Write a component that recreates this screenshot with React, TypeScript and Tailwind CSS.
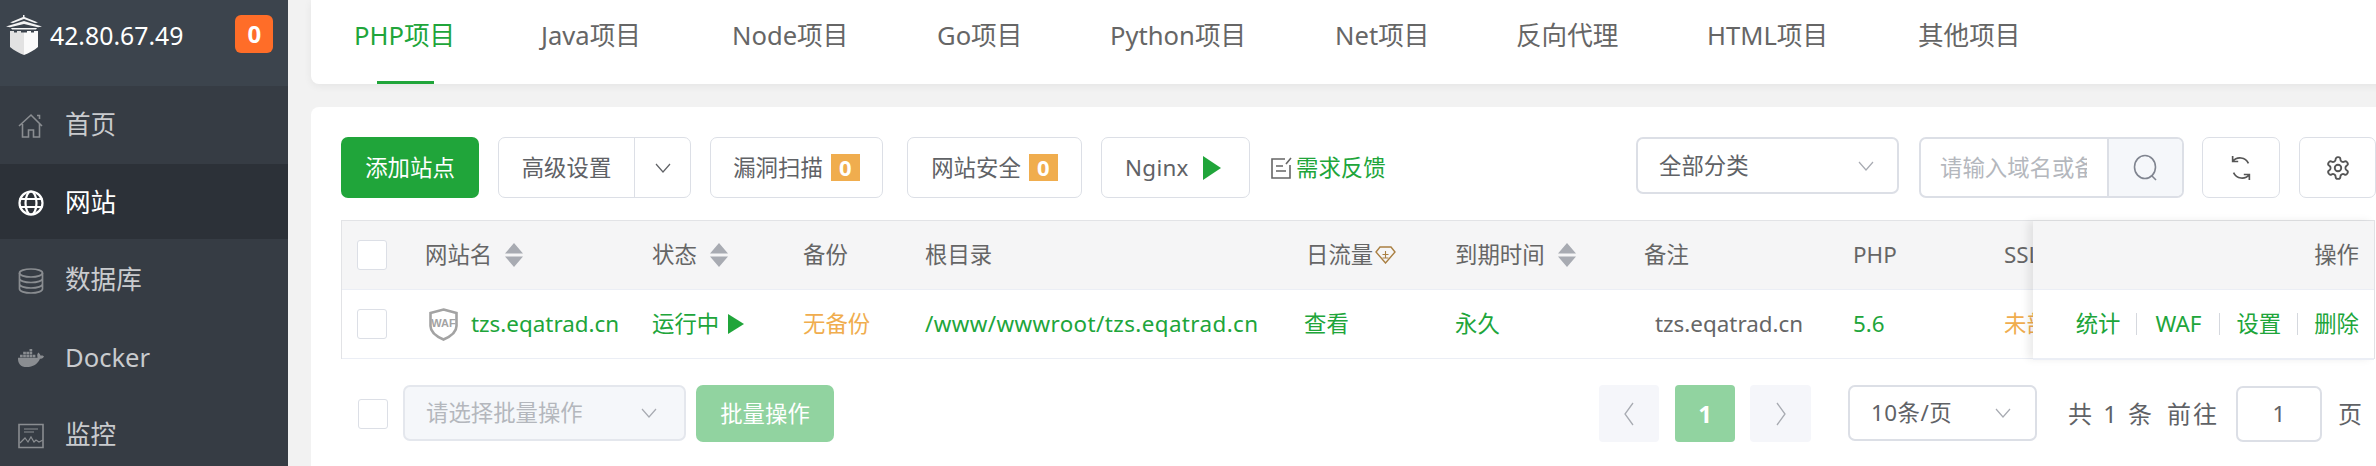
import type { ReactNode } from "react";
import { FaDocker } from "react-icons/fa";

// tab widths include the gap up to the next tab
const tabs = [
	{ label: "PHP项目", width: "w-[187px]" },
	{ label: "Java项目", width: "w-[191px]" },
	{ label: "Node项目", width: "w-[205px]" },
	{ label: "Go项目", width: "w-[173px]" },
	{ label: "Python项目", width: "w-[225px]" },
	{ label: "Net项目", width: "w-[181px]" },
	{ label: "反向代理", width: "w-[191px]" },
	{ label: "HTML项目", width: "w-[211px]" },
	{ label: "其他项目", width: "w-[110px]" },
];

const fontStack = "font-['Noto_Sans','Noto_Sans_CJK_SC',sans-serif]";

function HouseIcon() {
	return (
		<svg width="26" height="26" viewBox="0 0 26 26" fill="none" stroke="#8a8d91" strokeWidth="1.6">
			<path d="M1 13 13 2l11 11M4.5 11v13h6v-7h5v7h6V11M19 2.5h2.5V6" />
		</svg>
	);
}

function GlobeIcon() {
	return (
		<svg width="26" height="26" viewBox="0 0 26 26" fill="none" stroke="#fff" strokeWidth="2.2">
			<circle cx="13" cy="13" r="11.5" />
			<ellipse cx="13" cy="13" rx="5.5" ry="11.5" />
			<path d="M1.5 9h23M1.5 17h23" />
		</svg>
	);
}

function DatabaseIcon() {
	return (
		<svg width="26" height="26" viewBox="0 0 26 26" fill="none" stroke="#8a8d91" strokeWidth="1.7">
			<ellipse cx="13" cy="5" rx="11.5" ry="4" />
			<path d="M1.5 5v16c0 2.2 5.2 4 11.5 4s11.5-1.8 11.5-4V5M1.5 10.5c0 2.2 5.2 4 11.5 4s11.5-1.8 11.5-4M1.5 16c0 2.2 5.2 4 11.5 4s11.5-1.800 11.500-4" />
		</svg>
	);
}

function MonitorIcon() {
	return (
		<svg width="26" height="26" viewBox="0 0 26 26" fill="none" stroke="#8a8d91" strokeWidth="1.6">
			<path d="M1 1.500h24v23H1z" />
			<path d="M6 6h14M6 9h10" strokeWidth="1.2" />
			<path d="M2 20l5-5 3 4 3-5 3 5 2-2 3 2 4-2" strokeWidth="1.2" />
		</svg>
	);
}

function LogoIcon() {
	return (
		<svg width="36" height="40" viewBox="0 0 36 40" className="shrink-0">
			<path d="M17 0h1.500v2L32 7.500l-3 .500L18 4 7 8l-3-.500L17 2z" fill="#f4f4f4" />
			<path d="M0 11.500 18 6l18 5.500-4 .800L18 9 4 12.300z" fill="#f4f4f4" />
			<path d="M5 13h26l-1 1.500H6z" fill="#f4f4f4" />
			<path d="M4 16h4v1.500h3V16h4v1.500h3V40c-5-2-10-4.500-14-8z" fill="#e2e2e2" />
			<path d="M18 17.500h3V16h4v1.500h3V16h4v16c-4 3.500-9 6-14 8z" fill="#fafafa" />
		</svg>
	);
}

function Chevron({ color = "#a8abb2" }: { color?: string }) {
	return (
		<svg width="16" height="10" viewBox="0 0 16 10" fill="none" stroke={color} strokeWidth="1.2">
			<path d="M1 1l7 8 7-8" />
		</svg>
	);
}

function SortIcon() {
	return (
		<svg width="18" height="24" viewBox="0 0 18 24" fill="#a8abb2" className="shrink-0">
			<path d="M9 0l9 10.500H0zM0 13.500h18L9 24z" />
		</svg>
	);
}

function PlayIcon({ className }: { className: string }) {
	return (
		<svg viewBox="0 0 16 20" fill="#20a53a" preserveAspectRatio="none" className={className}>
			<path d="M0 0l16 10L0 20z" />
		</svg>
	);
}

function Checkbox() {
	return <span className="block h-[30px] w-[30px] shrink-0 rounded-[3px] border border-[#dcdfe6] bg-white" />;
}

function Badge() {
	return (
		<span className="flex h-[27px] w-[29px] items-center justify-center bg-[#f0ad4e] text-[22px] font-bold text-white">
			0
		</span>
	);
}

function ToolButton({ className, children }: { className: string; children: ReactNode }) {
	return (
		<div className={`flex h-[61px] shrink-0 items-center rounded-[7px] border border-[#dcdfe6] bg-white text-[#606266] ${className}`}>
			{children}
		</div>
	);
}

function WafIcon() {
	return (
		<svg width="29" height="33" viewBox="0 0 29 33" className="shrink-0">
			<path d="M14.500 1.500 27.500 5v13c0 6-6 10.500-13 13.500C7.500 28.500 1.500 24 1.500 18V5z" fill="#fff" stroke="#a3a3a3" strokeWidth="2.600" />
			<text x="14.500" y="19" textAnchor="middle" fontSize="11" fontWeight="700" fill="#a3a3a3" fontFamily="Liberation Sans">
				WAF
			</text>
		</svg>
	);
}

function DiamondIcon() {
	return (
		<svg width="21" height="18" viewBox="0 0 21 18" fill="none" stroke="#a97f42" strokeWidth="1.4" className="shrink-0">
			<path d="M5 1h11l4 5-9.500 11L1 6z" />
			<path d="M10.500 5v7M7.500 8.500h6M7.500 12h6" strokeWidth="1.100" />
		</svg>
	);
}

function Separator() {
	return <span className="mx-[16px] h-[22px] w-px bg-[#d5d8de]" />;
}

function Cell({ width, children }: { width: string; children: ReactNode }) {
	return <div className={`flex shrink-0 items-center ${width}`}>{children}</div>;
}

function NavItem({ icon, label, active }: { icon: ReactNode; label: string; active?: boolean }) {
	return (
		<div className={`flex h-[75px] items-center gap-[21px] pt-[3px] pl-[18px] ${active ? "bg-[#2c3138] text-white" : "text-[#c9cbce]"}`}>
			<span className="flex w-[26px] justify-center">{icon}</span>
			<span className="text-[25.600px]">{label}</span>
		</div>
	);
}

export default function App() {
	return (
		<div className={`flex h-[466px] w-[2376px] overflow-hidden bg-[#f2f2f2] text-[22.400px] ${fontStack}`}>
			{/* sidebar */}
			<aside className="w-[288px] shrink-0 bg-[#363c44]">
				<div className="flex h-[86px] items-start bg-[#3c444d] pt-[15px] pl-[6px]">
					<LogoIcon />
					<span className="mt-[2px] ml-[8px] text-[24.800px] leading-[36px] text-white">42.80.67.49</span>
					<span className="ml-[52px] flex h-[38px] w-[38px] items-center justify-center rounded-[6px] bg-[#ff6d28] text-[24px] font-bold text-white">
						0
					</span>
				</div>
				<nav className="flex flex-col gap-[2.500px] pt-[0.500px]">
					<NavItem icon={<HouseIcon />} label="首页" />
					<NavItem icon={<GlobeIcon />} label="网站" active />
					<NavItem icon={<DatabaseIcon />} label="数据库" />
					<NavItem icon={<FaDocker size={26} color="#8a8d91" />} label="Docker" />
					<NavItem icon={<MonitorIcon />} label="监控" />
				</nav>
			</aside>

			{/* main */}
			<main className="min-w-0 flex-1 overflow-hidden pl-[23px]">
				<div className="-mr-[30px] flex h-[84px] rounded-b-[8px] bg-white pl-[43px] shadow-[0_2px_8px_rgba(0,0,0,0.06)]">
					{tabs.map((tab, i) => (
						<div key={tab.label} className={`relative shrink-0 pt-[14px] text-[25.600px] leading-[44px] ${tab.width} ${i === 0 ? "text-[#20a53a]" : "text-[#666]"}`}>
							{tab.label}
							{i === 0 && <span className="absolute bottom-0 left-[23px] h-[3px] w-[57px] bg-[#20a53a]" />}
						</div>
					))}
				</div>

				<div className="-mr-[30px] mt-[23px] h-[400px] rounded-t-[8px] bg-white pt-[30px] pr-[30px] pl-[30px]">
					{/* toolbar */}
					<div className="flex items-start">
						<div className="flex h-[61px] w-[138px] items-center justify-center rounded-[7px] bg-[#20a53a] text-white">添加站点</div>
						<ToolButton className="ml-[19px] w-[193px]">
							<span className="flex h-full w-[136px] items-center justify-center border-r border-[#dcdfe6]">高级设置</span>
							<span className="flex flex-1 justify-center"><Chevron color="#606266" /></span>
						</ToolButton>
						<ToolButton className="ml-[19px] w-[173px] justify-center gap-[8px]">
							漏洞扫描
							<Badge />
						</ToolButton>
						<ToolButton className="ml-[24px] w-[175px] justify-center gap-[8px]">
							网站安全
							<Badge />
						</ToolButton>
						<ToolButton className="ml-[19px] w-[149px] gap-[14px] pl-[23px]">
							<span className="tracking-[0.3px]">Nginx</span>
							<PlayIcon className="h-[24px] w-[18px]" />
						</ToolButton>
						<div className="ml-[21px] flex h-[61px] items-center gap-[4px]">
							<svg width="21" height="24" viewBox="0 0 21 24" fill="none" stroke="#666" strokeWidth="1.600">
								<path d="M19 9v13H1V3h13M5 10h7M5 15h10M15 8l5-6" />
							</svg>
							<span className="text-[#20a53a]">需求反馈</span>
						</div>
						<div className="ml-auto flex h-[57px] w-[263px] items-center justify-between rounded-[7px] border-2 border-[#dcdfe6] pr-[23px] pl-[21px] text-[#606266]">
							全部分类
							<Chevron />
						</div>
						<div className="ml-[20px] flex h-[61px] w-[265px] overflow-hidden rounded-[7px] border-2 border-[#dcdfe6]">
							<span className="w-[186px] overflow-hidden pt-[12px] pl-[19px] whitespace-nowrap text-[#b4b7bd]">
								<span className="block w-[147px] overflow-hidden">请输入域名或备注</span>
							</span>
							<span className="flex flex-1 items-center justify-center border-l-2 border-[#dcdfe6] bg-[#f5f7fa]">
								<svg width="26" height="28" viewBox="0 0 26 28" fill="none" stroke="#808590" strokeWidth="1.600">
									<ellipse cx="12" cy="13" rx="10.500" ry="11.500" />
									<path d="M19 22l4 4" />
								</svg>
							</span>
						</div>
						<ToolButton className="ml-[18px] w-[78px] justify-center">
							<svg width="26" height="26" viewBox="0 0 24 28" fill="none" stroke="#555" strokeWidth="1.800" className="-scale-x-100">
								<path d="M4 9a10 10 0 0 1 17-2M20 19A10 10 0 0 1 3 21M21 1v6h-6M3 27v-6h6" />
							</svg>
						</ToolButton>
						<ToolButton className="ml-[19px] w-[77px] justify-center">
							<svg width="26" height="28" viewBox="0 0 24 24" fill="none" stroke="#555" strokeWidth="1.700">
								<path d="M12.220 2h-.44a2 2 0 0 0-2 2v.18a2 2 0 0 1-1 1.730l-.43.250a2 2 0 0 1-2 0l-.15-.08a2 2 0 0 0-2.730.730l-.22.380a2 2 0 0 0 .730 2.730l.15.100a2 2 0 0 1 1 1.720v.510a2 2 0 0 1-1 1.740l-.15.090a2 2 0 0 0-.730 2.730l.22.380a2 2 0 0 0 2.730.730l.15-.08a2 2 0 0 1 2 0l.43.250a2 2 0 0 1 1 1.730V20a2 2 0 0 0 2 2h.44a2 2 0 0 0 2-2v-.18a2 2 0 0 1 1-1.730l.43-.250a2 2 0 0 1 2 0l.15.080a2 2 0 0 0 2.730-.730l.22-.390a2 2 0 0 0-.730-2.730l-.15-.080a2 2 0 0 1-1-1.740v-.500a2 2 0 0 1 1-1.740l.15-.090a2 2 0 0 0 .730-2.730l-.22-.380a2 2 0 0 0-2.730-.730l-.15.080a2 2 0 0 1-2 0l-.43-.250a2 2 0 0 1-1-1.730V4a2 2 0 0 0-2-2z" />
								<circle cx="12" cy="12" r="3" />
							</svg>
						</ToolButton>
					</div>

					{/* table */}
					<div className="mt-[22px] mr-[1px] flex h-[139px] border-x border-t border-[#e2e3e6] text-[#666]">
						<div className="min-w-0 flex-1 overflow-hidden">
							<div className="flex h-[68px] bg-[#f5f5f6]">
								<Cell width="w-[83px] pl-[15px]"><Checkbox /></Cell>
								<Cell width="w-[227px] gap-[13px]">网站名<SortIcon /></Cell>
								<Cell width="w-[151px] gap-[13px]">状态<SortIcon /></Cell>
								<Cell width="w-[122px]">备份</Cell>
								<Cell width="w-[381px]">根目录</Cell>
								<Cell width="w-[149px] gap-[2px]">日流量<DiamondIcon /></Cell>
								<Cell width="w-[189px] gap-[13px]">到期时间<SortIcon /></Cell>
								<Cell width="w-[209px]">备注</Cell>
								<Cell width="w-[151px]">PHP</Cell>
								<Cell width="w-[100px]">SSL</Cell>
							</div>
							<div className="flex h-[71px] border-t border-b-2 border-[#ebeef5] whitespace-nowrap text-[#20a53a]">
								<Cell width="w-[83px] pl-[15px]"><Checkbox /></Cell>
								<Cell width="w-[227px] gap-[13px] pl-[4px]"><WafIcon />tzs.eqatrad.cn</Cell>
								<Cell width="w-[151px] gap-[9px]">运行中<PlayIcon className="h-[20px] w-[16px]" /></Cell>
								<Cell width="w-[122px] text-[#f0ad4e]">无备份</Cell>
								<Cell width="w-[381px] tracking-[0.4px]">/www/wwwroot/tzs.eqatrad.cn</Cell>
								<Cell width="w-[149px]"><span className="-ml-[2px]">查看</span></Cell>
								<Cell width="w-[189px]">永久</Cell>
								<Cell width="w-[209px] pl-[11px] text-[#666]">tzs.eqatrad.cn</Cell>
								<Cell width="w-[151px]">5.6</Cell>
								<Cell width="w-[100px] text-[#f0ad4e]">未部署</Cell>
							</div>
						</div>
						{/* fixed column */}
						<div className="z-10 w-[341px] shrink-0 shadow-[-5px_0_8px_rgba(0,0,0,0.08)]">
							<div className="flex h-[68px] items-center justify-end bg-[#f5f5f6] pr-[15px]">操作</div>
							<div className="flex h-[71px] items-center justify-end border-t border-b-2 border-[#ebeef5] bg-white pr-[15px] text-[#20a53a]">
								统计<Separator /><span className="w-[50px] text-center">WAF</span><Separator />设置<Separator />删除
							</div>
						</div>
					</div>

					{/* footer */}
					<div className="mt-[26px] flex items-start">
						<div className="flex h-[57px] items-center pl-[17px]"><Checkbox /></div>
						<div className="ml-[15px] flex h-[56px] w-[283px] items-center justify-between rounded-[7px] border-2 border-[#e4e7ed] bg-[#f5f7fa] pr-[27px] pl-[21px] text-[#b4b7bd]">
							请选择批量操作
							<Chevron />
						</div>
						<div className="ml-[10px] flex h-[57px] w-[138px] items-center justify-center rounded-[7px] bg-[#91d3a0] text-white">批量操作</div>
						<div className="ml-[765px] flex h-[57px] w-[60px] items-center justify-center rounded-[4px] bg-[#f5f6fa]">
							<svg width="10" height="24" viewBox="0 0 10 24" fill="none" stroke="#a8abb2" strokeWidth="1.300"><path d="M9 1 1 12l8 11" /></svg>
						</div>
						<div className="ml-[16px] flex h-[57px] w-[60px] items-center justify-center rounded-[4px] bg-[#91d3a0] text-[24px] font-bold text-white">1</div>
						<div className="ml-[15px] flex h-[57px] w-[61px] items-center justify-center rounded-[4px] bg-[#f5f6fa]">
							<svg width="10" height="24" viewBox="0 0 10 24" fill="none" stroke="#a8abb2" strokeWidth="1.300"><path d="M1 1l8 11-8 11" /></svg>
						</div>
						<div className="ml-[37px] flex h-[56px] w-[189px] items-center justify-between rounded-[7px] border-2 border-[#dcdfe6] pr-[24px] pl-[21px] text-[#606266]">
							<span className="tracking-[0.5px]">10条/页</span>
							<Chevron />
						</div>
						<div className="ml-[31px] flex h-[57px] w-[84px] items-center justify-between text-[24px] text-[#606266]">
							<span>共</span>
							<span>1</span>
							<span>条</span>
						</div>
						<div className="ml-[15px] flex h-[57px] w-[54px] items-center text-[24px] tracking-[2px] text-[#606266]">前往</div>
						<div className="mt-[1px] ml-[15px] flex h-[56px] w-[86px] items-center justify-center rounded-[7px] border-2 border-[#dcdfe6] text-[#606266]">1</div>
						<div className="ml-[16px] flex h-[57px] items-center text-[24px] text-[#606266]">页</div>
					</div>
				</div>
			</main>
		</div>
	);
}
